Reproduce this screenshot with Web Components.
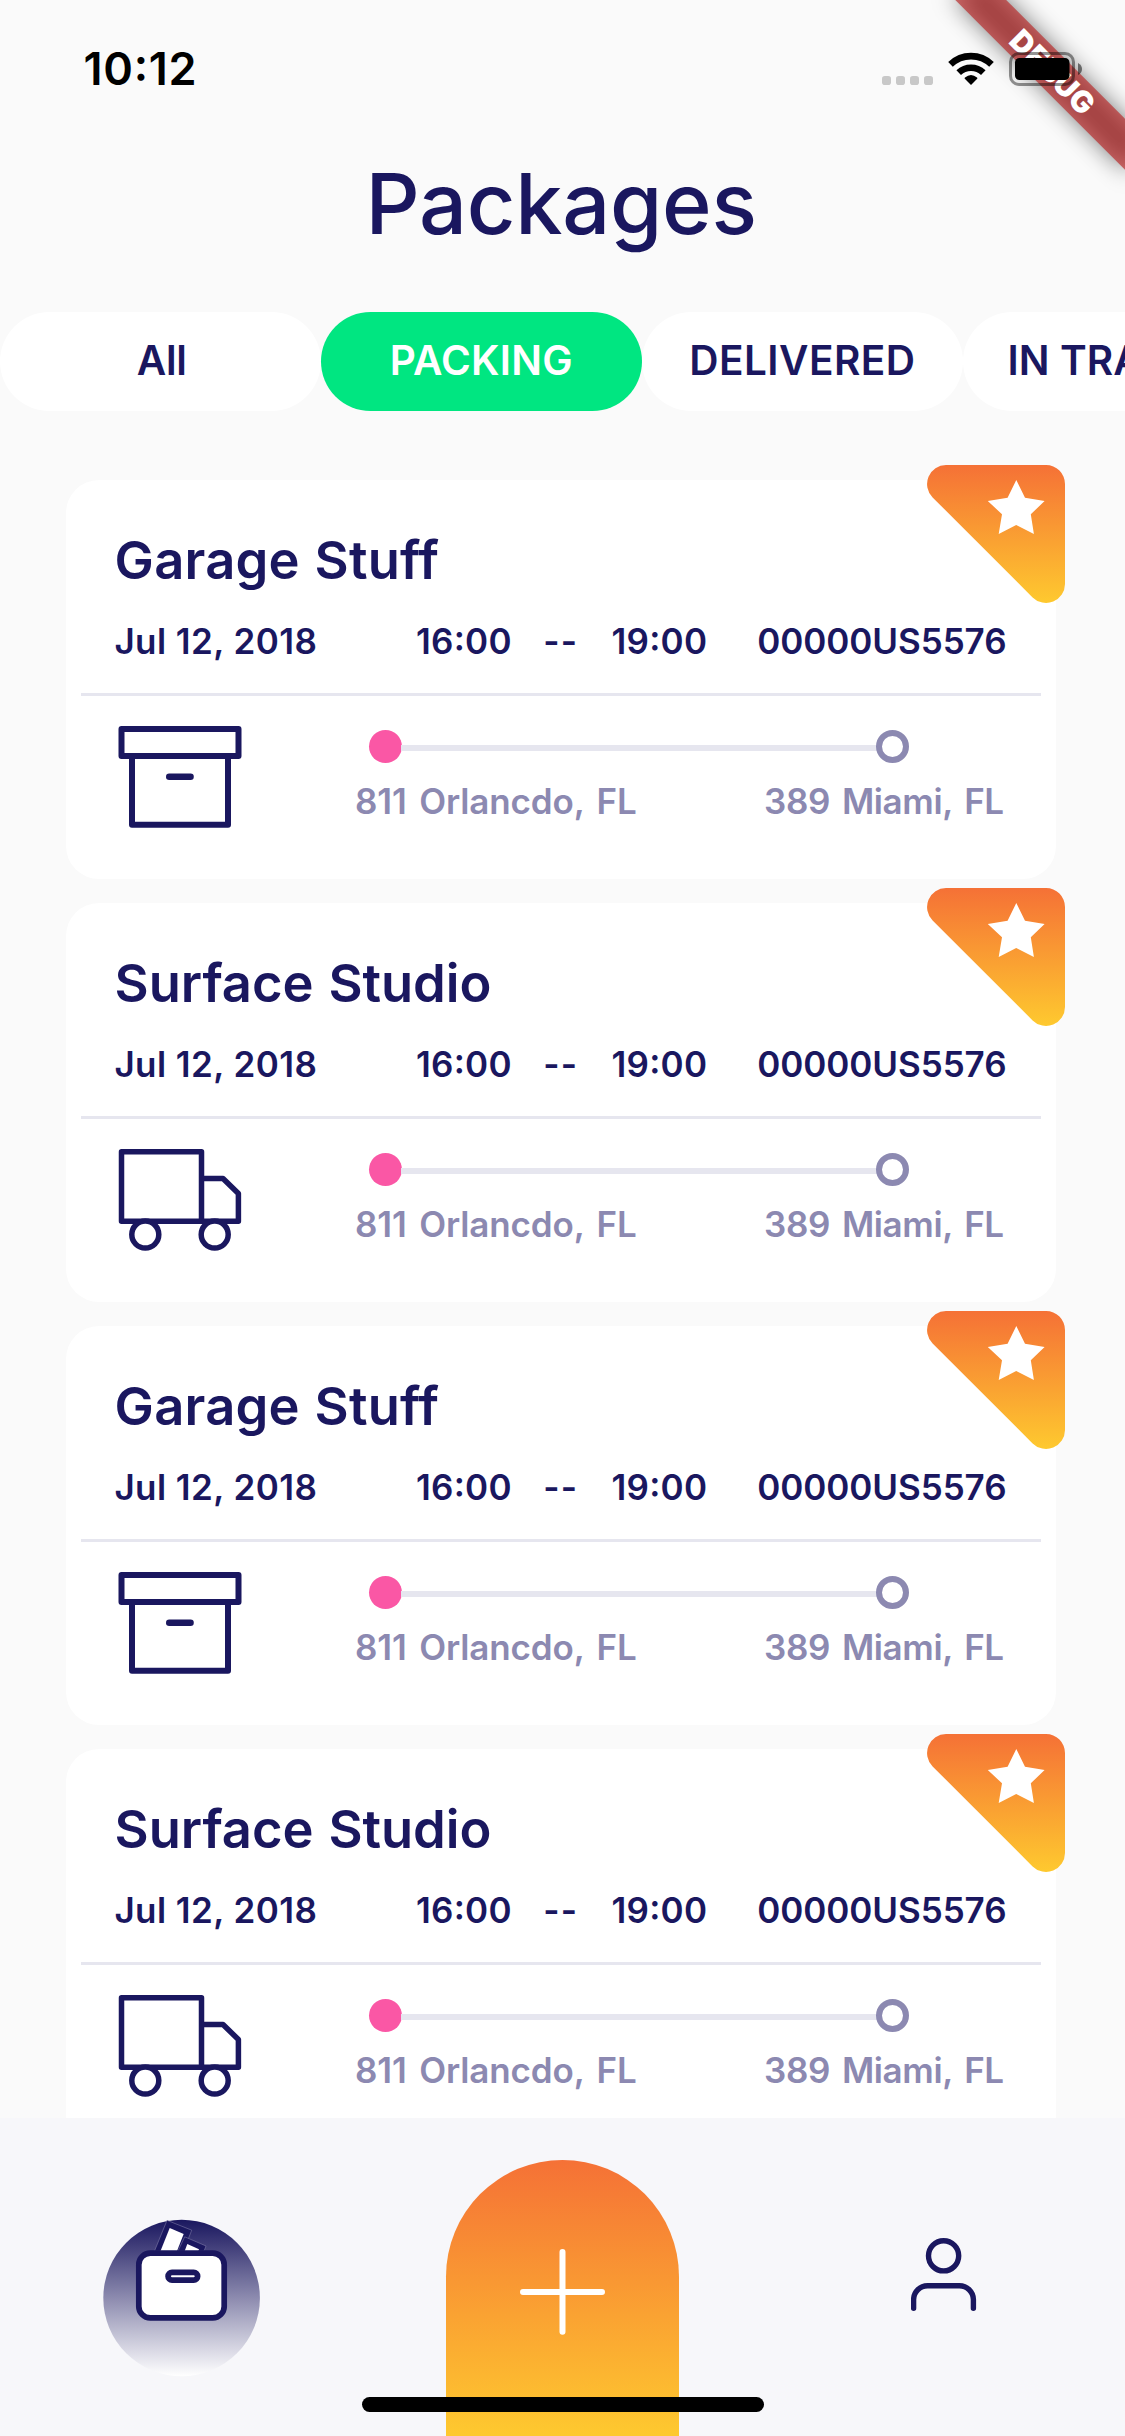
<!DOCTYPE html>
<html lang="en">
<head>
<meta charset="utf-8">
<title>Packages</title>
<style>
  html, body { margin: 0; padding: 0; }
  body { width: 1125px; height: 2436px; overflow: hidden; background: #fafafa; font-family: Inter, "Liberation Sans", sans-serif; color: #1a175f; }
</style>
</head>
<body>
<packages-app></packages-app>
<script>
const define = (name, html, setup) => {
  const template = document.createElement('template');
  template.innerHTML = html;
  customElements.define(name, class extends HTMLElement {
    connectedCallback() {
      if (this.shadowRoot) return;
      this.attachShadow({ mode: 'open' }).appendChild(template.content.cloneNode(true));
      if (setup) setup(this, this.shadowRoot);
    }
  });
};

/* A single line of text whose visible ink spans exactly `w` pixels.
   `word` and `word-w` set the letter spacing from one word; the word gaps take the rest. */
const pen = document.createElement('canvas').getContext('2d');
const inkOf = text => {
  const m = pen.measureText(text);
  return { left: m.actualBoundingBoxLeft, width: m.actualBoundingBoxLeft + m.actualBoundingBoxRight };
};
customElements.define('tracked-text', class extends HTMLElement {
  connectedCallback() {
    if (this.shadowRoot) return;
    const root = this.attachShadow({ mode: 'open' });
    root.innerHTML = `<style>
      :host { display: block; white-space: nowrap; line-height: inherit; }
      span { display: block; font-feature-settings: "calt" 1; }
    </style><span></span>`;
    const text = this.getAttribute('text');
    const w = parseFloat(this.getAttribute('w'));
    const word = this.getAttribute('word');
    const span = root.querySelector('span');
    span.textContent = text;
    const cs = getComputedStyle(this);
    pen.font = `${cs.fontWeight} ${cs.fontSize} ${cs.fontFamily}`;
    const ink = inkOf(text);
    const gaps = text.length - 1;
    let spacing = (w - ink.width) / gaps;
    if (word) {
      spacing = (parseFloat(this.getAttribute('word-w')) - inkOf(word).width) / (word.length - 1);
      span.style.wordSpacing = ((w - ink.width - spacing * gaps) / (text.split(' ').length - 1)).toFixed(3) + 'px';
    }
    this.style.width = w + 'px';
    span.style.letterSpacing = spacing.toFixed(3) + 'px';
    span.style.marginLeft = ink.left.toFixed(2) + 'px';
  }
});

define('debug-banner', `<style>
  :host { position: absolute; right: 0; top: 0; width: 240px; height: 240px; overflow: hidden; }
  div { position: absolute; left: 120px; top: 84px; width: 240px; height: 36px; transform-origin: 120px -84px; transform: rotate(45deg); }
  .shadow { background: rgba(0,0,0,.5); filter: blur(11.9px); }
  .band { background: rgba(183,28,28,.63); color: #fff; font-size: 30px; font-weight: 900; line-height: 36px; display: flex; justify-content: center; }
</style><div class="shadow"></div><div class="band"><tracked-text text="DEBUG" w="104"></tracked-text></div>`);

define('status-bar', `<style>
  :host { display: flex; height: 132px; box-sizing: border-box; padding: 45px 43px 0 85.4px; justify-content: space-between; position: relative; z-index: 2; }
  .time { font-size: 45px; font-weight: 600; line-height: 48px; color: #000; }
  .icons { display: flex; margin-top: 7px; height: 34px; }
</style>
<div class="time"><tracked-text text="10:12" w="109.2"></tracked-text></div>
<svg class="icons" width="200" height="34" viewBox="882 52 200 34">
  <g fill="#c8c8c8"><rect x="882" y="76" width="9" height="9" rx="2.8"/><rect x="896" y="76" width="9" height="9" rx="2.8"/><rect x="910" y="76" width="9" height="9" rx="2.8"/><rect x="924" y="76" width="9" height="9" rx="2.8"/></g>
  <g fill="none" stroke="#000" stroke-width="6.6"><path d="M950.5 64.4A29.5 29.5 0 0 1 991.5 64.4"/><path d="M958.7 72.7A17.8 17.8 0 0 1 983.3 72.7"/></g>
  <path d="M971 85 964.8 78.8Q964.4 78.2 965 77.6Q971 72.6 977 77.6Q977.6 78.2 977.2 78.8Z"/>
  <rect x="1010.5" y="53.5" width="63" height="31" rx="8.5" fill="none" stroke="#000" stroke-opacity=".42" stroke-width="3"/>
  <rect x="1015" y="58" width="54.5" height="22" rx="4.5"/>
  <path d="M1078 63Q1082 65 1082 69T1078 75Z" fill-opacity=".5"/>
</svg>`);

define('filter-tab', `<style>
  :host { flex: none; display: flex; justify-content: center; width: 321px; height: 99px; border-radius: 49.5px; background: #fff; font-size: 40.5px; font-weight: 600; line-height: 97px; }
  :host([active]) { background: #00e681; color: #fff; }
</style><slot></slot>`);

define('filter-tabs', `<style>:host { display: flex; width: 1125px; height: 99px; overflow: hidden; }</style><slot></slot>`);

define('star-badge', `<style>:host { position: absolute; right: -9px; top: -15px; display: block; width: 138px; height: 138px; }</style>
<svg width="138" height="138" viewBox="0 0 138 138">
  <defs><linearGradient id="g" x1="0" y1="0" x2="0" y2="1"><stop offset="0" stop-color="#f57136"/><stop offset="1" stop-color="#fec92f"/></linearGradient></defs>
  <path fill="url(#g)" d="M19 0H119A19 19 0 0 1 138 19V119A19 19 0 0 1 105.6 132.4L5.6 32.4A19 19 0 0 1 19 0Z"/>
  <path fill="#fff" d="M89.3 15 98 32.7 117.6 36 103.8 49.3 106.9 69 89.2 60 71.7 69 75 49.3 60.8 36 80.6 32.7Z"/>
</svg>`);

const ICONS = {
  box: `<svg width="124" height="103" viewBox="118 726 124 103" fill="none" stroke="#1a175f" stroke-width="6" stroke-linejoin="round"><rect x="121.5" y="729" width="117" height="27"/><path d="M132 756V824.7H228V756"/><path d="M169.2 776.7H190.6" stroke-width="6.4" stroke-linecap="round"/></svg>`,
  truck: `<svg width="124" height="103" viewBox="118 1149 124 103" fill="none" stroke="#1a175f" stroke-width="5.5" stroke-linejoin="round"><rect x="121.5" y="1151.8" width="80" height="69.5"/><path d="M201.5 1178.5H223L238.4 1193.5V1221.3H201.5"/><circle cx="145.3" cy="1234.6" r="13.5" fill="#fff"/><circle cx="214.7" cy="1234.6" r="13.5" fill="#fff"/></svg>`
};

define('route-line', `<style>
  :host { display: block; width: 648px; padding-top: 4px; }
  .track { display: flex; align-items: center; margin: 0 95.3px 0 12.9px; height: 33.5px; }
  .from { width: 33px; height: 33px; border-radius: 50%; background: #fa57a5; }
  .bar { flex: 1; height: 6px; background: #e6e6ef; margin: 3px -1px 0; }
  .to { box-sizing: border-box; width: 33px; height: 33px; border-radius: 50%; border: 6px solid #8c89b1; background: #fff; }
  .places { display: flex; justify-content: space-between; margin-top: 17.8px; line-height: 40px; font-size: 35px; font-weight: 600; color: #8c89b1; }
</style>
<div class="track"><div class="from"></div><div class="bar"></div><div class="to"></div></div>
<div class="places"><tracked-text text="811 Orlancdo, FL" w="280.6" word="Orlancdo," word-w="162.4"></tracked-text><tracked-text text="389 Miami, FL" w="239" word="Miami," word-w="107.2"></tracked-text></div>`);

define('package-card', `<style>
  :host { display: flex; flex-direction: column; flex: none; position: relative; box-sizing: border-box; height: 399px; border-radius: 33px; background: #fff; padding-top: 50px; }
  .name { font-size: 52.5px; font-weight: 600; line-height: 60px; margin: 0 0 31px 50.6px; }
  .meta { display: grid; grid-template-columns: 301.6px 128.2px 67.3px 145.7px 247px; height: 40px; line-height: 40px; font-size: 35px; font-weight: 600; padding-left: 49.4px; justify-content: start; }
  .rule { height: 3px; background: #e6e6ef; margin: 32px 15px 30px; }
  .trip { display: flex; padding-left: 52px; }
  .icon { display: flex; width: 238.1px; }
  .icon svg { display: block; }
</style>
<div class="name"></div>
<div class="meta"><tracked-text text="Jul 12, 2018" w="200.8"></tracked-text><tracked-text text="16:00" w="93.4"></tracked-text><tracked-text text="--" w="29.6"></tracked-text><tracked-text text="19:00" w="93.5"></tracked-text><tracked-text text="00000US5576" w="247"></tracked-text></div>
<div class="rule"></div>
<div class="trip"><div class="icon"></div><route-line></route-line></div>
<star-badge></star-badge>`, (host, root) => {
  const name = host.getAttribute('name');
  const [full, first] = host.getAttribute('name-widths').split(' ');
  root.querySelector('.name').innerHTML = `<tracked-text text="${name}" w="${full}" word="${name.split(' ')[0]}" word-w="${first}"></tracked-text>`;
  root.querySelector('.icon').innerHTML = ICONS[host.getAttribute('icon')];
});

define('bottom-nav', `<style>
  :host { display: flex; flex: none; position: relative; height: 318px; background: #f7f7fa; justify-content: space-between; align-items: flex-start; box-sizing: border-box; padding: 42px 148px 0 103px; }
  svg { display: block; }
  .packages { margin-top: 59px; }
  .add { display: flex; justify-content: center; box-sizing: border-box; width: 233px; height: 276px; margin-right: 46px; padding-top: 89px; border-radius: 116.5px 116.5px 0 0; background: linear-gradient(#f57136, #fec92f); }
  .profile { margin-top: 77px; }
  .home { position: absolute; left: 362px; top: 279px; width: 402px; height: 15px; border-radius: 7.5px; background: #000; }
</style>
<svg class="packages" width="157" height="158" viewBox="103 2219 157 158">
  <defs><linearGradient id="n" x1="0" y1="0" x2="0" y2="1"><stop offset="0" stop-color="#1a175f"/><stop offset="1" stop-color="#fff"/></linearGradient></defs>
  <circle cx="181.6" cy="2298" r="78.3" fill="url(#n)"/>
  <path fill="#1a175f" stroke="#8c89b1" stroke-width=".5" d="M154.5 2251 167 2220.3 191.7 2230.2 183.5 2251Z"/>
  <path fill="#fff" d="M169.7 2228 183.7 2234 177 2251H160.5Z"/>
  <path fill="#1a175f" stroke="#8c89b1" stroke-width=".5" d="M178 2251 184.7 2236.8 206 2246 204 2251Z"/>
  <path fill="#fff" d="M187.3 2244 199 2249.3 198.3 2251H184.7Z"/>
  <rect x="138.8" y="2253.2" width="85.4" height="64.7" rx="11.5" fill="#fff" stroke="#1a175f" stroke-width="5.7"/>
  <rect x="168.1" y="2272.3" width="29.5" height="7.8" rx="3.9" fill="#fff" stroke="#1a175f" stroke-width="5.8"/>
</svg>
<div class="add"><svg width="85" height="86" viewBox="0 0 85 86" stroke="#fff" stroke-width="6" stroke-linecap="round"><path d="M3 43H82M42.5 3V82.7"/></svg></div>
<svg class="profile" width="66" height="74" viewBox="911 2237 66 74" fill="none" stroke="#1a175f" stroke-width="5.4" stroke-linecap="round">
  <circle cx="943.6" cy="2255.8" r="15.1"/><path d="M913.6 2308.2V2299.5A14 14 0 0 1 927.6 2285.8H959.4A14 14 0 0 1 973.4 2299.5V2308.2"/>
</svg>
<div class="home"></div>`);

define('packages-app', `<style>
  :host { display: flex; flex-direction: column; position: relative; width: 1125px; height: 2436px; overflow: hidden; }
  h1 { margin: 21px 0 59px; height: 100px; font-size: 84.5px; line-height: 100px; font-weight: 500; display: flex; justify-content: center; }
  .list { flex: 1; min-height: 0; overflow: hidden; display: flex; flex-direction: column; gap: 24px; padding: 69px 69px 0 66px; }
</style>
<status-bar></status-bar>
<h1><tracked-text text="Packages" w="382"></tracked-text></h1>
<filter-tabs>
  <filter-tab><tracked-text text="All" w="47.5"></tracked-text></filter-tab>
  <filter-tab active><tracked-text text="PACKING" w="179.3"></tracked-text></filter-tab>
  <filter-tab><tracked-text text="DELIVERED" w="222.6"></tracked-text></filter-tab>
  <filter-tab><tracked-text text="IN TRANSIT" w="228"></tracked-text></filter-tab>
</filter-tabs>
<div class="list">
  <package-card name="Garage Stuff" name-widths="322 181" icon="box"></package-card>
  <package-card name="Surface Studio" name-widths="372.8 194.8" icon="truck"></package-card>
  <package-card name="Garage Stuff" name-widths="322 181" icon="box"></package-card>
  <package-card name="Surface Studio" name-widths="372.8 194.8" icon="truck"></package-card>
</div>
<bottom-nav></bottom-nav>
<debug-banner></debug-banner>`);
</script>
</body>
</html>
